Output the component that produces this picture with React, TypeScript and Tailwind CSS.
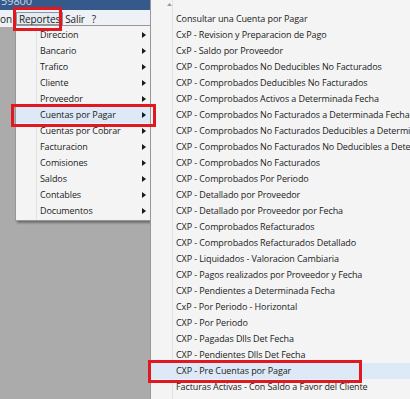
import React from "react";

const font = { fontFamily: '"Open Sans", "Noto Sans", sans-serif' };

const menu1 = [
  "Direccion",
  "Bancario",
  "Trafico",
  "Cliente",
  "Proveedor",
  "Cuentas por Pagar",
  "Cuentas por Cobrar",
  "Facturacion",
  "Comisiones",
  "Saldos",
  "Contables",
  "Documentos",
];

const menu2 = [
  "Consultar una Cuenta por Pagar",
  "CxP - Revision y Preparacion de Pago",
  "CxP - Saldo por Proveedor",
  "CXP - Comprobados No Deducibles No Facturados",
  "CXP - Comprobados Deducibles No Facturados",
  "CXP - Comprobados Activos a Determinada Fecha",
  "CXP - Comprobados No Facturados a Determinada Fecha",
  "CXP - Comprobados No Facturados Deducibles a Determinada Fecha",
  "CXP - Comprobados No Facturados No Deducibles a Determinada Fecha",
  "CXP - Comprobados No Facturados",
  "CXP - Comprobados Por Periodo",
  "CXP - Detallado por Proveedor",
  "CXP - Detallado por Proveedor por Fecha",
  "CXP - Comprobados Refacturados",
  "CXP - Comprobados Refacturados Detallado",
  "CXP - Liquidados - Valoracion Cambiaria",
  "CXP - Pagos realizados por Proveedor y Fecha",
  "CXP - Pendientes a Determinada Fecha",
  "CxP - Por Periodo - Horizontal",
  "CXP - Por Periodo",
  "CXP - Pagadas Dlls Det Fecha",
  "CXP - Pendientes Dlls Det Fecha",
  "CXP - Pre Cuentas por Pagar",
  "Facturas Activas - Con Saldo a Favor del Cliente",
];

function Arrow() {
  return (
    <svg width="4" height="6" viewBox="0 0 4 6" className="block">
      <path d="M0 0 L4 3 L0 6 Z" fill="#1a1a1a" />
    </svg>
  );
}

export default function App() {
  return (
    <div
      className="relative w-[410px] h-[399px] overflow-hidden bg-[#ababab] text-[9px] text-[#1b1b1b] tracking-[-0.1px]"
      style={font}
    >
      {/* title bar */}
      <div className="h-[10px] bg-[#35598a] overflow-hidden relative">
        <span className="absolute left-[1px] top-[-6px] text-[11px] text-[#c9d6e6] leading-[14px]">
          59800
        </span>
      </div>
      {/* menubar */}
      <div className="h-[17px] bg-[#eef1f5] flex items-center leading-none text-[10px]">
        <span className="w-[14px] overflow-hidden">on</span>
        <span className="ml-[2px] h-[13px] px-[2px] flex items-center border border-[#8a95a3] bg-[#e4ebf3]">
          Reportes
        </span>
        <span className="ml-[2px]">Salir</span>
        <span className="ml-[7px]">?</span>
      </div>

      {/* first dropdown */}
      <div className="absolute left-[15px] top-[25px] w-[136px] bg-[#f4f4f4] border border-[#979797] py-[1px] shadow-[2px_2px_2px_rgba(0,0,0,0.35)]">
        <div className="absolute left-[20px] top-0 bottom-0 w-px bg-[#e2e3e3]" />
        {menu1.map((t, i) => (
          <div
            key={t}
            className={
              "relative h-[16px] flex items-center pl-[24px] pr-[4px] " +
              (i === 5 ? "bg-[#dde9f6]" : "")
            }
          >
            <span className="flex-1 whitespace-nowrap">{t}</span>
            <Arrow />
          </div>
        ))}
      </div>

      {/* second dropdown */}
      <div className="absolute left-[150px] top-0 w-[270px] h-[420px] bg-[#f4f4f4] border-l border-[#979797]">
        <div className="absolute left-[21px] top-0 bottom-0 w-px bg-[#e2e3e3]" />
        <div className="h-[11px] flex items-start pl-[16px] pt-[3px]">
          <svg width="5" height="3" viewBox="0 0 5 3" className="block">
            <path d="M0 3 L2.5 0 L5 3 Z" fill="#9a9a9a" />
          </svg>
        </div>
        {menu2.map((t, i) => (
          <div
            key={t}
            className={
              "relative h-[16px] flex items-center pl-[25px] whitespace-nowrap overflow-hidden " +
              (i === 22 ? "bg-[#dde9f6]" : "")
            }
          >
            {t}
          </div>
        ))}
      </div>

      {/* red highlight boxes */}
      <div className="absolute left-[13px] top-[7px] w-[49px] h-[24px] border-[3px] border-[#e3171f]" />
      <div className="absolute left-[11px] top-[104px] w-[145px] h-[23px] border-[3px] border-[#e3171f]" />
      <div className="absolute left-[148px] top-[360px] w-[214px] h-[23px] border-[3px] border-[#e3171f]" />
    </div>
  );
}
